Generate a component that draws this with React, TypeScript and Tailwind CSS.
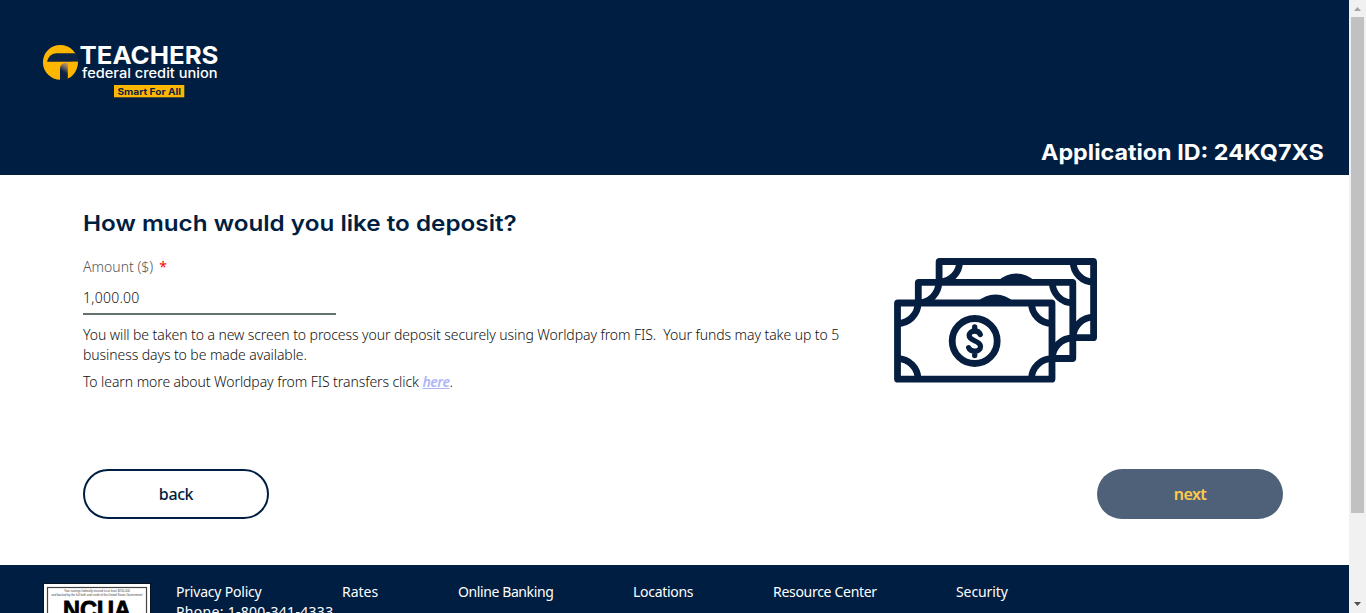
function Logo() {
  return (
    <svg className="block" width="178" height="56" viewBox="42 43 178 56" role="img" aria-label="Teachers Federal Credit Union">
      <defs>
        <linearGradient id="stem" x1="0.8" y1="0" x2="0.5" y2="1">
          <stop offset="0" stopColor="#cfa65c" />
          <stop offset="0.25" stopColor="#8a7462" />
          <stop offset="0.6" stopColor="#0d2345" />
        </linearGradient>
      </defs>
      <circle cx="60.300" cy="62.300" r="17.400" fill="#ffb600" />
      <path d="M47 61.700C48.500 56 52 53.300 57 53.300H75.500C77.200 55.600 78 58.500 78 61.700Z" fill="#0d2345" />
      <path d="M60 80V68.500C60 65.500 62.500 62.600 68.300 62.600V80Z" fill="url(#stem)" />
      <path d="M67.800 78.500V67C67.800 64.500 69 62.300 71.500 61.700H77.800C78 69 74 76 67.800 78.500Z" fill="#ffb600" />
      <g fontFamily="Inter, sans-serif">
        <text x="79.500" y="63.700" fontSize="24" fontWeight="700" fill="#fff" textLength="139" lengthAdjust="spacingAndGlyphs">TEACHERS</text>
        <text x="82" y="78" fontSize="13.500" fontWeight="500" fill="#fff" textLength="135.500" lengthAdjust="spacingAndGlyphs">federal credit union</text>
        <rect x="114" y="85" width="70.300" height="12.300" fill="#ffb600" />
        <text x="117.500" y="94.700" fontSize="9" fontWeight="700" fill="#0d2345" textLength="63.500" lengthAdjust="spacingAndGlyphs">Smart For All</text>
      </g>
    </svg>
  );
}

function Bill({ x, y }: { x: number; y: number }) {
  return (
    <g transform={`translate(${x} ${y})`}>
      <rect x="3.500" y="3.500" width="154.500" height="76.200" rx="0.500" fill="#fff" />
      <path
        d="M24 3.500a20.500 20.500 0 0 1-20.500 20.500M137.500 3.500a20.500 20.500 0 0 0 20.500 20.500M3.500 59.200a20.500 20.500 0 0 1 20.500 20.500M158 59.200a20.500 20.500 0 0 0-20.500 20.500"
        fill="none"
      />
      <circle cx="80.700" cy="41.500" r="22.500" fill="#fff" />
    </g>
  );
}

function Money() {
  return (
    <svg className="block" width="204" height="126" viewBox="0 0 204 126" stroke="#061f41" strokeWidth="6.800" strokeLinejoin="round">
      <Bill x={41.6} y={0} />
      <Bill x={20.8} y={20.8} />
      <Bill x={0} y={41.5} />
      <path
        d="M86.300 76.500C85.400 74.300 83.500 73 80.700 73C77.600 73 75.200 74.800 75.200 77.600C75.200 83.400 86.500 82.400 86.500 88.400C86.500 91.200 83.900 93.200 80.700 93.200C77.900 93.200 75.600 92 74.700 89.800M80.700 73V68.800M80.700 93.200V97.500"
        fill="none"
        strokeWidth="5.300"
        strokeLinecap="round"
      />
    </svg>
  );
}

function Seal() {
  return (
    <svg className="block shrink-0" width="108" height="32" viewBox="0 0 108 32" role="img" aria-label="NCUA">
      <rect x="0" y="0" width="108" height="40" fill="#06101f" />
      <rect x="1" y="1" width="106" height="40" fill="#fff" />
      <rect x="4.500" y="4.500" width="99" height="40" fill="none" stroke="#444" strokeWidth="1.200" />
      <g fontFamily="'Liberation Sans', sans-serif" textAnchor="middle" fill="#444">
        <text x="54" y="9.300" fontSize="3" fontWeight="400" textLength="66" lengthAdjust="spacingAndGlyphs">Your savings federally insured to at least $250,000</text>
        <text x="54" y="12.700" fontSize="3" fontWeight="400" textLength="91" lengthAdjust="spacingAndGlyphs">and backed by the full faith and credit of the United States Government</text>
        <text x="54" y="34.500" fontSize="23" fontWeight="700" fill="#000" stroke="#000" strokeWidth="0.800" textLength="68" lengthAdjust="spacingAndGlyphs">NCUA</text>
      </g>
    </svg>
  );
}

function Scrollbar() {
  return (
    <div className="flex w-[17px] shrink-0 flex-col items-center bg-[#f1f1f1]">
      <svg className="h-[17px] w-[17px] shrink-0" viewBox="0 0 17 17"><path d="M5 11L8.500 7L12 11Z" fill="#a3a3a3" /></svg>
      <div className="h-[496px] w-[13px] bg-[#c1c1c1]" />
      <svg className="mt-auto h-[17px] w-[17px] shrink-0" viewBox="0 0 17 17"><path d="M5 6L12 6L8.500 10Z" fill="#505050" /></svg>
    </div>
  );
}

export default function App() {
  return (
    <div className="flex h-[613px] w-[1366px] overflow-hidden bg-white font-['Noto_Sans',sans-serif] text-[14px]">
      <div className="flex min-w-0 flex-1 flex-col">
        <header className="flex h-[175px] shrink-0 flex-col justify-between bg-[#001e41] pt-[43px] pr-[25px] pb-[8px] pl-[42px]">
          <Logo />
          <div className="origin-right scale-x-[1.06] self-end font-['Inter',sans-serif] text-[22px] leading-[30px] font-bold text-white">Application ID: 24KQ7XS</div>
        </header>

        <main className="flex h-[390px] shrink-0 flex-col justify-between pt-[34px] pr-[66px] pb-[46px] pl-[83px]">
          <div className="flex">
            <div className="w-[811px]">
              <h1 className="origin-left scale-x-[1.102] font-['Inter',sans-serif] text-[22px] leading-[28px] font-semibold text-[#001e41]">How much would you like to deposit?</h1>
              <label className="mt-[20px] flex gap-[6px] leading-[20px] font-light text-[#555]">
                <span>Amount ($)</span>
                <span className="font-normal text-[#f00]">*</span>
              </label>
              <div className="mt-[11px] h-[27px] w-[253px] border-b-2 border-[#64726f] leading-[20px] font-light tracking-[0.25px] text-[#111]">1,000.00</div>
              <p className="mt-[10px] leading-[20px] font-light tracking-[-0.08px] whitespace-pre text-[#111]">
                {'You will be taken to a new screen to process your deposit securely using Worldpay from FIS.  Your funds may take up to 5\nbusiness days to be made available.'}
              </p>
              <p className="mt-[7px] leading-[20px] font-light tracking-[-0.08px] text-[#111]">
                To learn more about Worldpay from FIS transfers click <a className="font-semibold tracking-[-0.45px] text-[#adb5f5] italic underline">here</a>.
              </p>
            </div>
            <div className="pt-[49px]"><Money /></div>
          </div>
          <div className="flex justify-between">
            <button className="h-[50px] w-[186px] rounded-full border-2 border-[#001e41] text-[16px] font-medium tracking-[-0.4px] text-[#001e41]">back</button>
            <button className="h-[50px] w-[186px] rounded-full bg-[#4e6179] text-[16px] font-semibold tracking-[-0.6px] text-[#ffc94d]">next</button>
          </div>
        </main>

        <footer className="flex flex-1 overflow-hidden bg-[#001e41] pt-[18px] pl-[43px] text-white">
          <Seal />
          <div className="-mt-px pl-[25px] leading-[20px]">
            <nav className="flex tracking-[-0.3px] whitespace-nowrap">
              <a className="w-[166px] tracking-[-0.2px]">Privacy Policy</a>
              <a className="w-[116px] tracking-normal">Rates</a>
              <a className="w-[175px] tracking-[-0.4px]">Online Banking</a>
              <a className="w-[140px]">Locations</a>
              <a className="w-[183px]">Resource Center</a>
              <a className="tracking-[-0.1px]">Security</a>
            </nav>
            <div className="tracking-[0.3px]">Phone: 1-800-341-4333</div>
          </div>
        </footer>
      </div>
      <Scrollbar />
    </div>
  );
}
